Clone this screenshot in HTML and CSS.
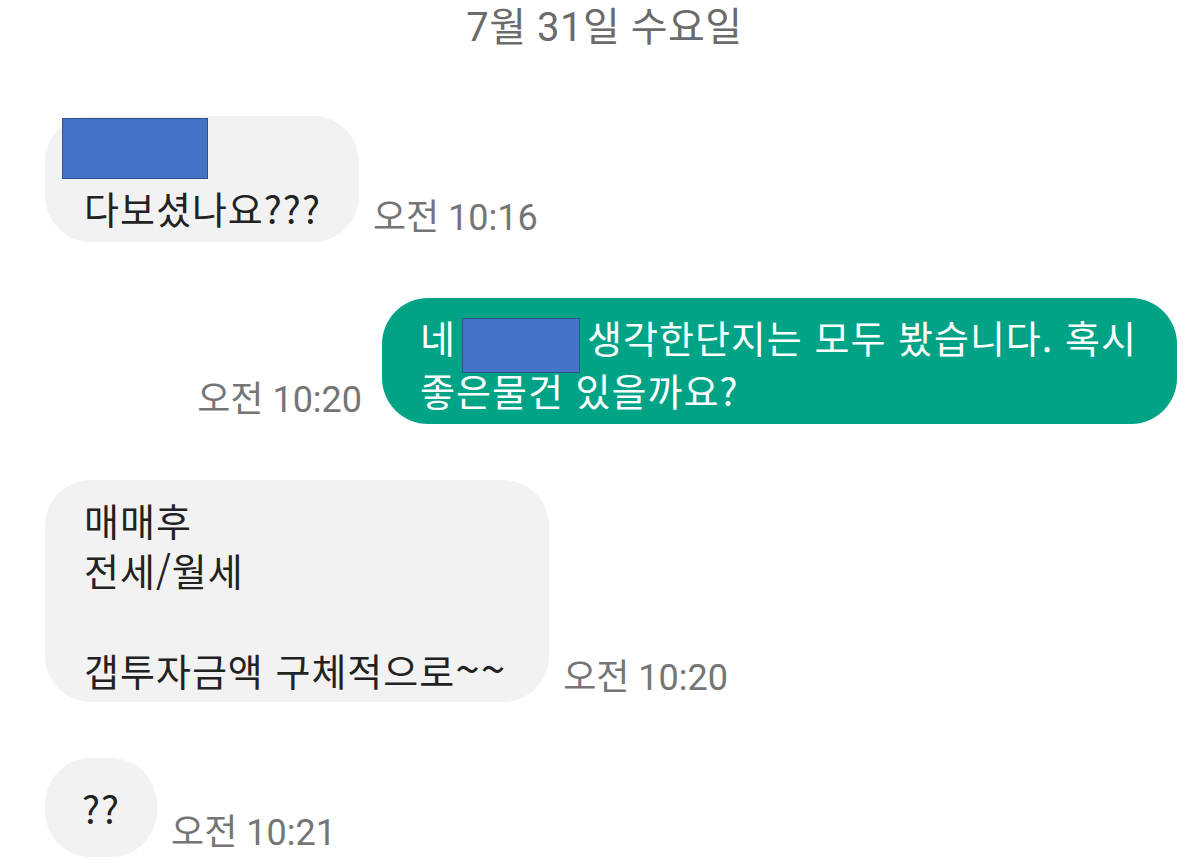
FILE: index.html
```html
<!DOCTYPE html>
<html lang="ko">
<head>
<meta charset="utf-8">
<link rel="stylesheet" href="styles.css">
</head>
<body>
<div class="chat">
  <div class="date">7월 31일 수요일</div>

  <div class="row in">
    <div class="bubble gray b1">
      <div class="redact redact-block"></div>
      <div class="line">다보셨나요???</div>
    </div>
    <div class="time">오전 10:16</div>
  </div>

  <div class="row out">
    <div class="time">오전 10:20</div>
    <div class="bubble green b2">네<span class="redact redact-inline"></span>생각한단지는 모두 봤습니다. 혹시<br>좋은물건 있을까요?</div>
  </div>

  <div class="row in">
    <div class="bubble gray b3">매매후<br>전세/월세<br><br>갭투자금액 구체적으로<span class="tilde">~~</span></div>
    <div class="time">오전 10:20</div>
  </div>

  <div class="row in">
    <div class="bubble gray b4">??</div>
    <div class="time">오전 10:21</div>
  </div>
</div>
</body>
</html>
```
FILE: styles.css
```css
html, body {
  margin: 0;
  padding: 0;
  background: #ffffff;
}

.chat {
  width: 1191px;
  height: 863px;
  overflow: hidden;
  display: flex;
  flex-direction: column;
  gap: 56px;
  padding: 0 14px 0 45px;
  box-sizing: border-box;
  font-family: "Noto Sans CJK KR", "Noto Sans", sans-serif;
}

.date {
  height: 60px;
  line-height: 56px;
  text-align: center;
  font-family: "Roboto", "Noto Sans CJK KR", sans-serif;
  font-size: 40px;
  letter-spacing: 0.5px;
  color: #6b6b6b;
  padding-right: 13px;
}

.row {
  display: flex;
  align-items: flex-end;
  gap: 14px;
}

.row.out {
  justify-content: flex-end;
  gap: 20px;
}

.bubble {
  border-radius: 46px;
  font-size: 38px;
  letter-spacing: 1px;
  line-height: 49px;
  white-space: nowrap;
  box-sizing: border-box;
}

.gray {
  background: #f2f2f2;
  color: #222222;
}

.green {
  background: #00a386;
  color: #ffffff;
}

.b1 {
  height: 126px;
  padding: 2px 38px 0 39px;
  display: flex;
  flex-direction: column;
  gap: 4px;
}

.b2 {
  height: 126px;
  padding: 16px 40px 0 38px;
  line-height: 46px;
}

.b3 {
  height: 222px;
  padding: 15px 43px 0 39px;
  line-height: 50px;
}

.tilde {
  font-size: 44px;
  letter-spacing: 1px;
  line-height: 0;
}

.b4 {
  height: 99px;
  padding: 25px 37px 0 37px;
}

.redact {
  background: #4472c4;
  border: 1.5px solid #2f528f;
  box-sizing: border-box;
}

.redact-block {
  width: 146px;
  height: 61px;
  margin-left: -22px;
}

.redact-inline {
  display: inline-block;
  width: 118px;
  height: 55px;
  margin: -6px 7px -6px 6px;
  vertical-align: -14px;
}

.time {
  font-family: "Roboto", "Noto Sans CJK KR", sans-serif;
  font-size: 36px;
  line-height: 40px;
  color: #757575;
  padding-bottom: 4px;
  white-space: nowrap;
}
```
